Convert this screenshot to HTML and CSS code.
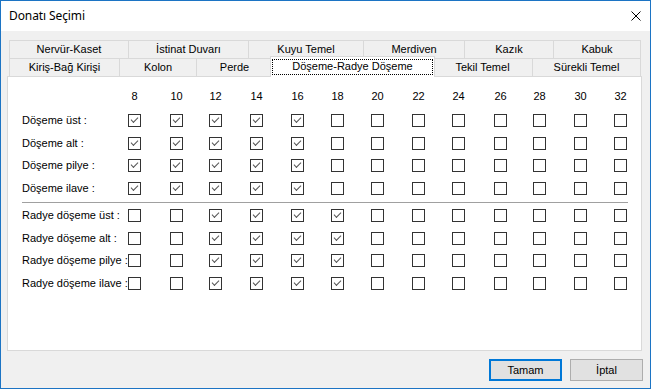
FILE: index.html
```html
<!DOCTYPE html>
<html lang="tr">
<head>
<meta charset="utf-8">
<title>Donatı Seçimi</title>
<link rel="stylesheet" href="styles.css">
</head>
<body>
<div class="window">
  <div class="titlebar">
    <span class="title">Donatı Seçimi</span>
    <svg class="close" width="10" height="10" viewBox="0 0 10 10"><path d="M0.5 0.5 L9.5 9.5 M9.5 0.5 L0.5 9.5" stroke="#000" stroke-width="1" fill="none"/></svg>
  </div>
  <div class="client">
    <div class="tabctl">
      <div class="tabrow row1">
        <div class="tab">Nervür-Kaset</div>
        <div class="tab">İstinat Duvarı</div>
        <div class="tab">Kuyu Temel</div>
        <div class="tab">Merdiven</div>
        <div class="tab">Kazık</div>
        <div class="tab">Kabuk</div>
      </div>
      <div class="tabrow row2">
        <div class="tab">Kiriş-Bağ Kirişi</div>
        <div class="tab">Kolon</div>
        <div class="tab">Perde</div>
        <div class="tab sel"><span class="focus">Döşeme-Radye Döşeme</span></div>
        <div class="tab">Tekil Temel</div>
        <div class="tab">Sürekli Temel</div>
      </div>
      <div class="panel">
        <div class="grid head">
          <span></span>
          <span class="num">8</span><span class="num">10</span><span class="num">12</span><span class="num">14</span><span class="num">16</span><span class="num">18</span><span class="num">20</span><span class="num">22</span><span class="num">24</span><span class="num">26</span><span class="num">28</span><span class="num">30</span><span class="num">32</span>
        </div>
        <div class="grid row tall">
          <span class="lbl">Döşeme üst :</span>
          <span class="cb on"></span><span class="cb on"></span><span class="cb on"></span><span class="cb on"></span><span class="cb on"></span><span class="cb"></span><span class="cb"></span><span class="cb"></span><span class="cb"></span><span class="cb"></span><span class="cb"></span><span class="cb"></span><span class="cb"></span>
        </div>
        <div class="grid row short">
          <span class="lbl">Döşeme alt :</span>
          <span class="cb on"></span><span class="cb on"></span><span class="cb on"></span><span class="cb on"></span><span class="cb on"></span><span class="cb"></span><span class="cb"></span><span class="cb"></span><span class="cb"></span><span class="cb"></span><span class="cb"></span><span class="cb"></span><span class="cb"></span>
        </div>
        <div class="grid row tall">
          <span class="lbl">Döşeme pilye :</span>
          <span class="cb on"></span><span class="cb on"></span><span class="cb on"></span><span class="cb on"></span><span class="cb on"></span><span class="cb"></span><span class="cb"></span><span class="cb"></span><span class="cb"></span><span class="cb"></span><span class="cb"></span><span class="cb"></span><span class="cb"></span>
        </div>
        <div class="grid row short">
          <span class="lbl">Döşeme ilave :</span>
          <span class="cb on"></span><span class="cb on"></span><span class="cb on"></span><span class="cb on"></span><span class="cb on"></span><span class="cb"></span><span class="cb"></span><span class="cb"></span><span class="cb"></span><span class="cb"></span><span class="cb"></span><span class="cb"></span><span class="cb"></span>
        </div>
        <div class="sep"></div>
        <div class="grid row tall">
          <span class="lbl">Radye döşeme üst :</span>
          <span class="cb"></span><span class="cb"></span><span class="cb on"></span><span class="cb on"></span><span class="cb on"></span><span class="cb on"></span><span class="cb"></span><span class="cb"></span><span class="cb"></span><span class="cb"></span><span class="cb"></span><span class="cb"></span><span class="cb"></span>
        </div>
        <div class="grid row short">
          <span class="lbl">Radye döşeme alt :</span>
          <span class="cb"></span><span class="cb"></span><span class="cb on"></span><span class="cb on"></span><span class="cb on"></span><span class="cb on"></span><span class="cb"></span><span class="cb"></span><span class="cb"></span><span class="cb"></span><span class="cb"></span><span class="cb"></span><span class="cb"></span>
        </div>
        <div class="grid row tall">
          <span class="lbl">Radye döşeme pilye :</span>
          <span class="cb"></span><span class="cb"></span><span class="cb on"></span><span class="cb on"></span><span class="cb on"></span><span class="cb on"></span><span class="cb"></span><span class="cb"></span><span class="cb"></span><span class="cb"></span><span class="cb"></span><span class="cb"></span><span class="cb"></span>
        </div>
        <div class="grid row short">
          <span class="lbl">Radye döşeme ilave :</span>
          <span class="cb"></span><span class="cb"></span><span class="cb on"></span><span class="cb on"></span><span class="cb on"></span><span class="cb on"></span><span class="cb"></span><span class="cb"></span><span class="cb"></span><span class="cb"></span><span class="cb"></span><span class="cb"></span><span class="cb"></span>
        </div>
      </div>
    </div>
    <div class="buttons">
      <button class="btn default">Tamam</button>
      <button class="btn">İptal</button>
    </div>
  </div>
</div>
</body>
</html>
```

FILE: styles.css
```css
* { box-sizing: border-box; }
html, body { margin: 0; padding: 0; }
body {
  width: 651px;
  height: 389px;
  overflow: hidden;
  font-family: "Liberation Sans", Arial, sans-serif;
  font-size: 11px;
  color: #000;
  background: #f0f0f0;
}
.window {
  width: 651px;
  height: 389px;
  border: 1px solid #1c74c4;
  display: flex;
  flex-direction: column;
  background: #f0f0f0;
}
.titlebar {
  height: 30px;
  background: #fff;
  display: flex;
  align-items: center;
  padding-left: 8px;
  flex: none;
}
.title {
  font-family: "Noto Sans", "Liberation Sans", sans-serif;
  font-size: 12px;
  line-height: 16px;
  letter-spacing: -0.1px;
}
.close {
  margin-left: auto;
  margin-right: 9px;
  display: block;
}
.client {
  flex: 1;
  padding: 9px 8px 0 6px;
  display: flex;
  flex-direction: column;
}
.tabctl {
  display: flex;
  flex-direction: column;
}
.tabrow {
  display: flex;
  align-items: flex-start;
  height: 18px;
  margin-left: 2px;
}
.tab {
  height: 19px;
  border: 1px solid #d9d9d9;
  border-bottom: none;
  margin-right: -1px;
  background: #f0f0f0;
  text-align: center;
  line-height: 17px;
  white-space: nowrap;
}
.row1 .tab:nth-child(1) { width: 120px; }
.row1 .tab:nth-child(2) { width: 121px; }
.row1 .tab:nth-child(3) { width: 116px; }
.row1 .tab:nth-child(4) { width: 102px; }
.row1 .tab:nth-child(5) { width: 90px; }
.row1 .tab:nth-child(6) { width: 88px; }
.row2 .tab:nth-child(1) { width: 111px; }
.row2 .tab:nth-child(2) { width: 78px; }
.row2 .tab:nth-child(3) { width: 77px; }
.row2 .tab:nth-child(4) { width: 165px; }
.row2 .tab:nth-child(5) { width: 101px; }
.row2 .tab:nth-child(6) { width: 109px; }
.row2 .tab { height: 18px; }
.tab.sel {
  position: relative;
  z-index: 2;
  height: 21px;
  margin-top: -2px;
  margin-left: -2px;
  margin-right: -3px;
  background: #fff;
  padding: 2px 1px 0;
}
.focus {
  display: block;
  height: 16px;
  border: 1px dotted #000;
  line-height: 13px;
}
.panel {
  position: relative;
  z-index: 1;
  height: 275px;
  background: #fff;
  border: 1px solid #d9d9d9;
  padding-left: 14px;
}
.grid {
  display: grid;
  grid-template-columns: 106px 42px 39px 41px 41px 40px 40px 41px 40px 42px 39px 41px 40px 13px;
  align-items: start;
}
.head {
  height: 32px;
  padding-top: 12px;
}
.num {
  width: 13px;
  display: flex;
  justify-content: center;
  line-height: 14px;
  white-space: nowrap;
}
.row.tall { height: 23px; }
.row.short { height: 22px; }
.lbl {
  margin-top: 5px;
  line-height: 13px;
  white-space: nowrap;
}
.cb {
  position: relative;
  display: block;
  width: 13px;
  height: 13px;
  margin-top: 5px;
  border: 1px solid #333;
  background: #fff;
}
.cb.on::after {
  content: "";
  position: absolute;
  left: 2px;
  top: 2px;
  width: 6px;
  height: 3px;
  border-left: 1px solid #555;
  border-bottom: 1px solid #555;
  transform: rotate(-45deg);
  transform-origin: center;
}
.sep {
  width: 606px;
  height: 1px;
  margin: 3px 0 1px;
  background: #a0a0a0;
}
.buttons {
  display: flex;
  justify-content: flex-end;
  gap: 8px;
  margin-top: 8px;
  margin-right: -1px;
}
.btn {
  width: 73px;
  height: 22px;
  padding: 0;
  font-family: "Liberation Sans", Arial, sans-serif;
  font-size: 11px;
  color: #000;
  background: #e1e1e1;
  border: 1px solid #adadad;
  border-radius: 0;
}
.btn.default {
  border: 2px solid #0078d7;
}
```
